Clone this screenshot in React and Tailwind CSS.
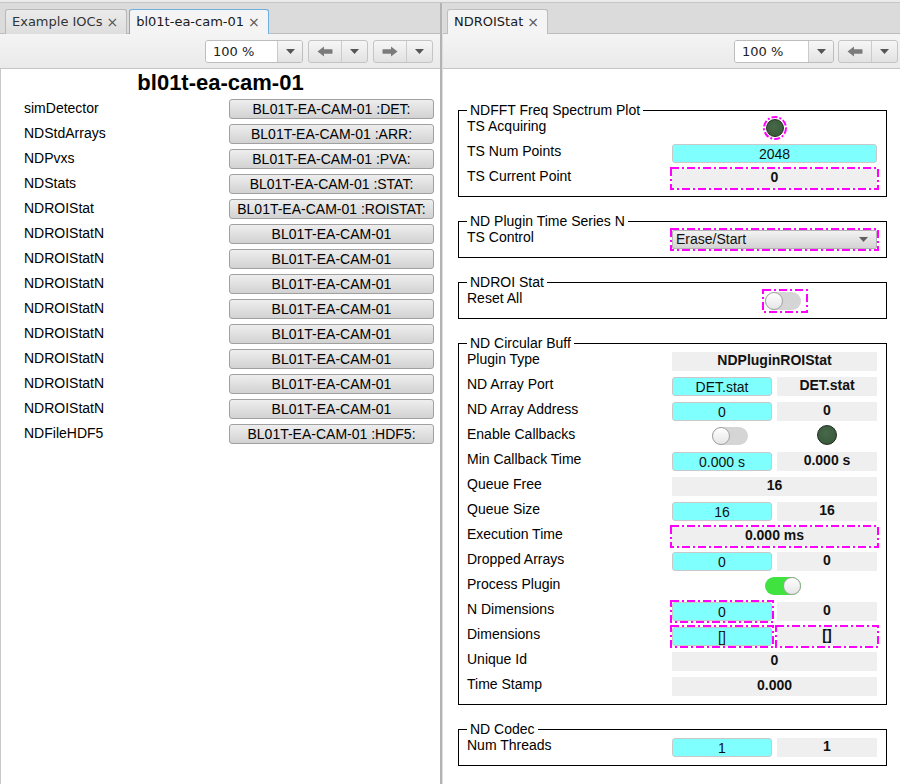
import React from "react";

function Tri({ color = "#555" }) {
  return (
    <svg width="9" height="5" viewBox="0 0 9 5">
      <path d="M0 0h9L4.5 5z" fill={color} />
    </svg>
  );
}

function Arrow({ dir }) {
  return (
    <svg width="16" height="11" viewBox="0 0 16 11" style={dir === "right" ? { transform: "scaleX(-1)" } : undefined}>
      <path d="M0.5 5.5 L7 0.5 L7 3.3 L15 3.3 Q15.5 3.3 15.5 4 L15.5 7 Q15.5 7.7 15 7.7 L7 7.7 L7 10.5 Z" fill="#7b7b7b" />
    </svg>
  );
}

function ZoomCombo() {
  return (
    <div className="flex h-[23px] w-[98px] shrink-0 overflow-hidden rounded-[3px] border border-[#bdbdbd]">
      <div className="flex-1 bg-white pl-[7px] text-[13px] leading-[21px] text-[#222]">100 %</div>
      <div className="flex w-[25px] items-center justify-center border-l border-[#cacaca] bg-linear-to-b from-[#f7f7f7] to-[#e3e3e3]">
        <Tri />
      </div>
    </div>
  );
}

function NavBtn({ dir }) {
  return (
    <div className="flex h-[23px] w-[60px] shrink-0 rounded-[3px] border border-[#c4c4c4] bg-linear-to-b from-[#f6f6f6] to-[#e2e2e2]">
      <div className="flex w-[33px] items-center justify-center border-r border-[#cbcbcb]">
        <Arrow dir={dir} />
      </div>
      <div className="flex flex-1 items-center justify-center">
        <Tri />
      </div>
    </div>
  );
}

function Tab({ label, variant }) {
  const cls =
    variant === "focus"
      ? "border-[#6fb0dc] bg-[#f4f4f4] text-[#1a1a1a] z-10"
      : variant === "selected"
      ? "border-[#bdbdbd] bg-[#f4f4f4] text-[#1a1a1a] z-10"
      : "border-[#b8b8b8] bg-linear-to-b from-[#ebebeb] to-[#dedede] text-[#333]";
  return (
    <div className={`relative -mb-px flex h-[25px] items-center gap-[4px] rounded-t-[3px] border border-b-0 pl-[6px] pr-[8px] text-[13px] ${cls}`}>
      <span>{label}</span>
      <span className="text-[14px] text-[#555]">×</span>
    </div>
  );
}

function Mag({ w, h, className = "", children }) {
  return (
    <div className={`relative shrink-0 ${className}`}>
      {children}
      <svg className="pointer-events-none absolute -left-[2px] -top-[2px]" width={w + 4} height={h + 4}>
        <rect x="1" y="1" width={w + 2} height={h + 2} fill="none" stroke="#ff00ff" strokeWidth="2" strokeDasharray="8 3 2 3" />
      </svg>
    </div>
  );
}

function Cyan({ children, wide = false, className = "" }) {
  return (
    <div className={`${wide ? "w-[205px]" : "w-[100px]"} h-[19px] shrink-0 rounded-[3px] border border-[#c9c9c9] bg-[#80ffff] pt-[1px] text-center text-[14px] leading-[17px] text-[#111] ${className}`}>
      {children}
    </div>
  );
}

function Gray({ children, wide = false, className = "" }) {
  return (
    <div className={`${wide ? "w-[205px]" : "w-[100px]"} h-[19px] shrink-0 bg-[#efefef] text-center text-[14px] font-bold leading-[17px] text-[#111] ${className}`}>
      {children}
    </div>
  );
}

function Led() {
  return <div className="h-[20px] w-[20px] rounded-full border border-[#1f2a1f] bg-[radial-gradient(circle_at_45%_40%,#46694a,#355536)]" />;
}

function Toggle({ on }) {
  return (
    <div className={`flex h-[18px] w-[36px] rounded-full ${on ? "justify-end bg-[#3fe23f]" : "justify-start bg-[#d5d5d5]"}`}>
      <div className="h-[18px] w-[18px] rounded-full border border-[#a3a3a3] bg-linear-to-b from-[#ffffff] to-[#e6e6e6]" />
    </div>
  );
}

function Row({ label, children }) {
  return (
    <div className="flex h-[25px]">
      <div className="w-[213px] shrink-0 pl-[8px] leading-[25px]">{label}</div>
      <div className="flex h-[25px] items-center gap-[5px]">{children}</div>
    </div>
  );
}

function Group({ title, children }) {
  return (
    <div className="w-[429px] border border-black pb-[7px]">
      <div className="-mb-[4px] -mt-[9px] ml-[8px] w-fit bg-white px-[3px] leading-[16px]">{title}</div>
      {children}
    </div>
  );
}

const leftRows = [
  ["simDetector", "BL01T-EA-CAM-01 :DET:"],
  ["NDStdArrays", "BL01T-EA-CAM-01 :ARR:"],
  ["NDPvxs", "BL01T-EA-CAM-01 :PVA:"],
  ["NDStats", "BL01T-EA-CAM-01 :STAT:"],
  ["NDROIStat", "BL01T-EA-CAM-01 :ROISTAT:"],
  ["NDROIStatN", "BL01T-EA-CAM-01"],
  ["NDROIStatN", "BL01T-EA-CAM-01"],
  ["NDROIStatN", "BL01T-EA-CAM-01"],
  ["NDROIStatN", "BL01T-EA-CAM-01"],
  ["NDROIStatN", "BL01T-EA-CAM-01"],
  ["NDROIStatN", "BL01T-EA-CAM-01"],
  ["NDROIStatN", "BL01T-EA-CAM-01"],
  ["NDROIStatN", "BL01T-EA-CAM-01"],
  ["NDFileHDF5", "BL01T-EA-CAM-01 :HDF5:"],
];

export default function App() {
  return (
    <div className="flex h-[784px] w-[900px] flex-col overflow-hidden bg-white font-['DejaVu_Sans',sans-serif]">
      <div className="h-[3px] shrink-0 border-b border-[#c6c6c6] bg-[#ebebeb]" />
      <div className="flex min-h-0 flex-1">
        {/* Left pane */}
        <div className="flex w-[440px] shrink-0 flex-col">
          <div className="flex h-[31px] shrink-0 items-end gap-[2px] border-b border-[#bcbcbc] bg-[#dbdbdb] pl-[5px]">
            <Tab label="Example IOCs" />
            <Tab label="bl01t-ea-cam-01" variant="focus" />
          </div>
          <div className="flex h-[35px] shrink-0 items-center justify-end gap-[5px] border-b border-[#c6c6c6] bg-linear-to-b from-[#f4f4f4] to-[#eaeaea] pr-[7px]">
            <ZoomCombo />
            <NavBtn dir="left" />
            <NavBtn dir="right" />
          </div>
          <div className="flex-1 border-l border-[#c8c8c8] font-['Liberation_Sans',Arial,sans-serif] text-[14px] text-black">
            <div className="mt-[1px] text-center text-[22px] font-bold leading-[26px]">bl01t-ea-cam-01</div>
            {leftRows.map(([label, btn], i) => (
              <div key={i} className="flex h-[25px] items-center">
                <div className="w-[228px] shrink-0 pl-[23px] leading-[25px]">{label}</div>
                <div className="mt-[1px] h-[20px] w-[205px] shrink-0 overflow-hidden whitespace-nowrap rounded-[3px] border border-[#a0a0a0] bg-linear-to-b from-[#eeeeee] to-[#d2d2d2] text-center leading-[18px]">
                  {btn}
                </div>
              </div>
            ))}
          </div>
        </div>

        {/* Divider */}
        <div className="w-[3px] shrink-0 border-r border-[#dedede] bg-[#b3b3b3]" />

        {/* Right pane */}
        <div className="flex min-w-0 flex-1 flex-col">
          <div className="flex h-[31px] shrink-0 items-end border-b border-[#bcbcbc] bg-[#dbdbdb] pl-[4px]">
            <Tab label="NDROIStat" variant="selected" />
          </div>
          <div className="flex h-[35px] shrink-0 items-center gap-[4px] overflow-hidden border-b border-[#c6c6c6] bg-linear-to-b from-[#f4f4f4] to-[#eaeaea] pl-[291px]">
            <div className="flex h-[23px] w-[100px] shrink-0 overflow-hidden rounded-[3px] border border-[#bdbdbd]">
              <div className="flex-1 bg-white pl-[7px] text-[13px] leading-[21px] text-[#222]">100 %</div>
              <div className="flex w-[25px] items-center justify-center border-l border-[#cacaca] bg-linear-to-b from-[#f7f7f7] to-[#e3e3e3]">
                <Tri />
              </div>
            </div>
            <NavBtn dir="left" />
            <NavBtn dir="right" />
          </div>
          <div className="flex flex-1 flex-col gap-[24px] pl-[15px] pt-[41px] font-['Liberation_Sans',Arial,sans-serif] text-[14px] text-black">
            <Group title="NDFFT Freq Spectrum Plot">
              <Row label="TS Acquiring">
                <div className="flex w-[205px] justify-center pt-[2px]">
                  <div className="relative">
                    <div className="h-[18px] w-[18px] rounded-full border border-[#1f2a1f] bg-[radial-gradient(circle_at_45%_40%,#46694a,#355536)]" />
                    <svg className="pointer-events-none absolute -left-[3px] -top-[3px]" width="24" height="24">
                      <circle cx="12" cy="12" r="11" fill="none" stroke="#ff00ff" strokeWidth="2" strokeDasharray="6 2 2 2" />
                    </svg>
                  </div>
                </div>
              </Row>
              <Row label="TS Num Points">
                <Cyan wide className="mt-[3px]">2048</Cyan>
              </Row>
              <Row label="TS Current Point">
                <Mag w={205} h={19} className="mt-[3px]">
                  <Gray wide>0</Gray>
                </Mag>
              </Row>
            </Group>

            <Group title="ND Plugin Time Series N">
              <Row label="TS Control">
                <Mag w={205} h={19} className="mt-[3px]">
                  <div className="flex h-[19px] w-[205px] items-center justify-between rounded-[2px] border border-[#b4b4b4] bg-linear-to-b from-[#f3f3f3] to-[#d3d3d3] pl-[3px] pr-[8px] text-[#111]">
                    <span>Erase/Start</span>
                    <Tri color="#606060" />
                  </div>
                </Mag>
              </Row>
            </Group>

            <Group title="NDROI Stat">
              <Row label="Reset All">
                <div className="ml-[92px] mt-[4px]">
                  <Mag w={42} h={20}>
                    <div className="h-[20px] w-[42px] pl-[1px] pt-[1px]">
                      <Toggle />
                    </div>
                  </Mag>
                </div>
              </Row>
            </Group>

            <Group title="ND Circular Buff">
              <Row label="Plugin Type">
                <Gray wide className="mt-[3px]">NDPluginROIStat</Gray>
              </Row>
              <Row label="ND Array Port">
                <Cyan className="mt-[3px]">DET.stat</Cyan>
                <Gray className="mt-[3px]">DET.stat</Gray>
              </Row>
              <Row label="ND Array Address">
                <Cyan className="mt-[3px]">0</Cyan>
                <Gray className="mt-[3px]">0</Gray>
              </Row>
              <Row label="Enable Callbacks">
                <div className="mt-[3px] w-[100px] pl-[40px]">
                  <Toggle />
                </div>
                <div className="flex w-[100px] justify-center">
                  <Led />
                </div>
              </Row>
              <Row label="Min Callback Time">
                <Cyan className="mt-[3px]">0.000 s</Cyan>
                <Gray className="mt-[3px]">0.000 s</Gray>
              </Row>
              <Row label="Queue Free">
                <Gray wide className="mt-[3px]">16</Gray>
              </Row>
              <Row label="Queue Size">
                <Cyan className="mt-[3px]">16</Cyan>
                <Gray className="mt-[3px]">16</Gray>
              </Row>
              <Row label="Execution Time">
                <Mag w={205} h={19} className="mt-[3px]">
                  <Gray wide>0.000 ms</Gray>
                </Mag>
              </Row>
              <Row label="Dropped Arrays">
                <Cyan className="mt-[3px]">0</Cyan>
                <Gray className="mt-[3px]">0</Gray>
              </Row>
              <Row label="Process Plugin">
                <div className="mt-[3px] w-[205px] pl-[93px]">
                  <Toggle on />
                </div>
              </Row>
              <Row label="N Dimensions">
                <Mag w={100} h={19} className="mt-[3px]">
                  <Cyan>0</Cyan>
                </Mag>
                <Gray className="mt-[3px]">0</Gray>
              </Row>
              <Row label="Dimensions">
                <Mag w={100} h={19} className="mt-[3px]">
                  <Cyan>[]</Cyan>
                </Mag>
                <Mag w={100} h={19} className="mt-[3px]">
                  <Gray>[]</Gray>
                </Mag>
              </Row>
              <Row label="Unique Id">
                <Gray wide className="mt-[3px]">0</Gray>
              </Row>
              <Row label="Time Stamp">
                <Gray wide className="mt-[3px]">0.000</Gray>
              </Row>
            </Group>

            <Group title="ND Codec">
              <Row label="Num Threads">
                <Cyan className="mt-[3px]">1</Cyan>
                <Gray className="mt-[3px]">1</Gray>
              </Row>
            </Group>
          </div>
        </div>
      </div>
    </div>
  );
}
